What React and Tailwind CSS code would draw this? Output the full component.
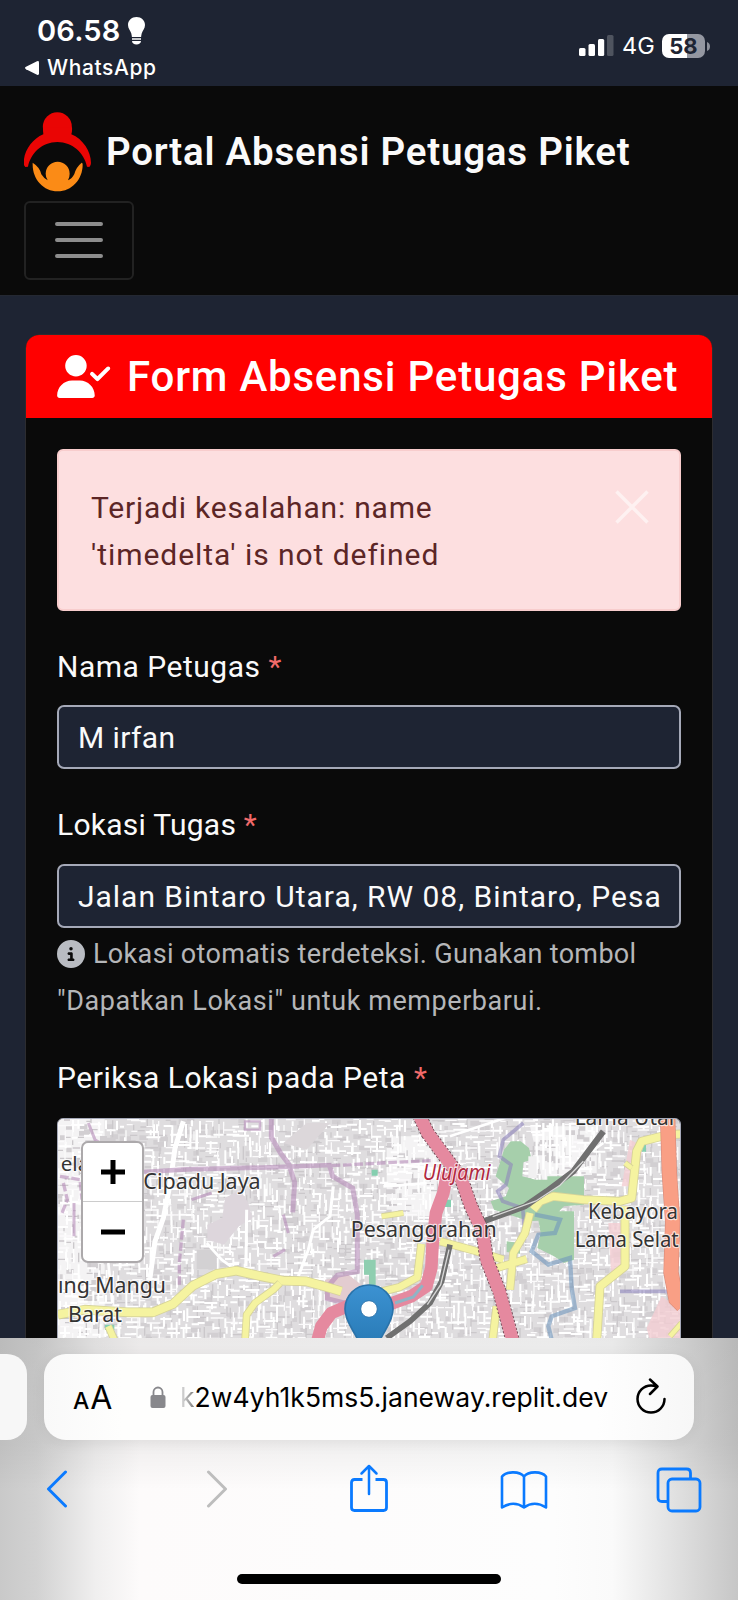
import React from 'react';
import { FaUserCheck, FaCircleInfo } from 'react-icons/fa6';

const sans = "font-['Roboto','Liberation_Sans',sans-serif]";
const system = "font-['Inter','Liberation_Sans',sans-serif]";

/* Deterministic random numbers for the built-up area of the map. */
function makeRandom(seed) {
  let s = seed;
  return () => {
    s = (s * 1664525 + 1013904223) % 4294967296;
    return s / 4294967296;
  };
}

function buildTexture() {
  const r = makeRandom(77);
  const lines = { street: '', edge: '', thin: '', block: '' };
  for (let y = 36; y < 705; y += 16) {
    for (let x = 20; x < 1895; x += 20) {
      const px = Math.round(x + r() * 12);
      const py = Math.round(y + r() * 10);
      const len = Math.round(12 + r() * 30);
      const kind = r();
      const dir = r() < 0.5 ? `h${len}` : `v${len}`;
      if (kind < 0.44) lines.street += `M${px} ${py}${dir}`;
      else if (kind < 0.66) lines.thin += `M${px} ${py}${dir}`;
      else if (kind < 0.86) lines.edge += `M${px} ${py}${dir}`;
      else lines.block += `M${px} ${py}h${Math.round(len * 0.8)}v14h-${Math.round(len * 0.8)}z`;
    }
  }
  return lines;
}

const texture = buildTexture();

function Road({ d, color, casing, width }) {
  return (
    <g fill="none" strokeLinejoin="round" strokeLinecap="butt">
      <path d={d} stroke={casing} strokeWidth={width + 5} />
      <path d={d} stroke={color} strokeWidth={width} />
    </g>
  );
}

function MapCanvas() {
  const label = {
    fontFamily: "'Noto Sans', sans-serif",
    paintOrder: 'stroke',
    stroke: 'rgba(255,255,255,0.7)',
    strokeWidth: 7,
    strokeLinejoin: 'round',
    fill: '#333',
    lengthAdjust: 'spacingAndGlyphs',
  };
  const yellow = { color: '#f5f3a0', casing: '#d6d398' };
  return (
    <svg className="block h-[221px] w-[622px]" viewBox="24 38 1866 663" preserveAspectRatio="none">
      <rect x="24" y="38" width="1866" height="663" fill="#dfdddf" />
      <path d="M24 38h140v660h-140zM1010 90h150v240h-150zM1440 60h200v170h-160z" fill="#f4f3f4" />
      <path d={texture.block} fill="#d2cfd2" />
      <path d={texture.edge} stroke="#cbc8cb" strokeWidth="4" fill="none" />
      <path d={texture.street} stroke="#ffffff" strokeWidth="6" fill="none" />
      <path d={texture.thin} stroke="#fbfafb" strokeWidth="4" fill="none" />
      <path d="M525 275l45-25 25 40 12 45-40 25-45 55-50-15v-45l45-20z" fill="#ddd6dc" />
      <path d="M700 110l70-60h70l-70 80z" fill="#dcd7da" />
      <path d="M440 430h60v60h-60z" fill="#d3d1d3" />
      <g stroke="#fff" fill="none">
        <path d="M400 45l-25 80-15 110-20 100-25 70-15 110" strokeWidth="15" />
        <path d="M590 310l-2 170M850 240l-10 90-50 40-15 60-30 80" strokeWidth="9" />
        <path d="M470 410l45 50 55 40M440 130l0-60M30 290h80M175 470l12 120" strokeWidth="8" />
        <path d="M1460 50v140M1480 50v140M1500 50v150M1520 50v140M1540 50v140M1560 50v130" strokeWidth="7" />
        <path d="M1200 90l180-60M1010 170l160 20M1000 240l130-10M1580 270l10-110 70-50" strokeWidth="8" />
      </g>

      {/* Parks */}
      <g fill="#a6cfab">
        <path d="M1362 130l20-25h30l25 20 8 35-25 8-3 42 40 10h35v-10h110v85l-60 5-40 40-65 5-45-15-60-20-10-25 45-15 10-25-40-35z" />
        <path d="M1460 315h112v145l-30 10-30-20-50-25 10-45z" />
        <path d="M1370 405l40 5v32l-40-5z" />
      </g>
      <path d="M1435 150h25v65h-25z" fill="#f1f0f1" />
      <path d="M942 460h20v45h-20zM885 525h32v28h-32zM957 460h20v110h-20z" fill="#8fceb0" />
      <path d="M965 190h18v18h-18zM1185 280h18v22h-18zM1770 112h18v24h-18zM165 655h28v16h-28z" fill="#85cfb0" />
      <path d="M825 520l70-15 45 35-60 50-55-10z" fill="#e3ccd0" />
      <path d="M1740 100l40 20-30 120h-35zM1675 350h38v130l-30 20zM1835 570l60 40v95h-95l-10-40z" fill="#f3cdd2" opacity="0.8" />

      {/* Administrative boundaries */}
      <g fill="none" stroke="#b58bb7" opacity="0.6">
        <path d="M280 197l130-8 250-6 185-7" strokeWidth="14" />
        <path d="M664 38v55l28 48 24 32 18 55-6 90M838 175l10 35 60 35 14 80v170l-60 12-30 35v35l60 15" strokeWidth="15" />
        <path d="M400 340l-12 130v70M30 210l60 10 6 60M40 230l12 50-16 40M845 178l185-10 112-5" strokeWidth="10" strokeDasharray="26 8" />
        <path d="M115 50l20 50 30 20M72 290v100M700 325l15 55M670 450l35-20M425 280l60-20" strokeWidth="9" />
        <path d="M585 70h45v-25h-45z" strokeWidth="7" />
        <path d="M1420 50l-60 50-12 50 35 25-15 60-25 20 15 30 60 20 5 60M1710 555h160" stroke="#8f85bd" strokeWidth="11" />
        <path d="M1455 325l75 15-15 40-50 5-20 50 50 40 65-20 5 90 10 60-70 25-10 30 15 60" stroke="#7197bd" strokeWidth="13" />
      </g>

      {/* Secondary roads */}
      <Road {...yellow} width={24} d="M24 625l80-15 130 8h75l60-25 60-55 70-35 60-10 80 18 60 12 70 2 55 15 50 15" />
      <Road {...yellow} width={18} d="M690 530l-20 20-55 40-25 35-5 80M175 660l20 45" />
      <Road {...yellow} width={20} d="M957 565l90-22 55-30 12-100M1170 405l110 30 80 25M1440 320l-15 60-35 60-10 110M1340 600l-12 100M1330 488l100-30" />
      <Road {...yellow} width={22} d="M1725 300v180l-75 60-10 165M1450 310l20-25 40-15 90 10 110 5 35-10 15-140 15-30 80-20 60-3" />
      <Road {...yellow} width={13} d="M1745 185l-20-15M1060 320l-65 10M1860 690l35-40" />

      {/* Trunk road on the eastern edge */}
      <path d="M1853 38l5 160 10 150-5 150 15 80 20 20" fill="none" stroke="#d98c7b" strokeWidth="46" />
      <path d="M1853 38l5 160 10 150-5 150 15 80 20 20" fill="none" stroke="#f99f85" strokeWidth="42" />

      {/* Railway */}
      <g fill="none">
        <path d="M1660 75l-90 120-80 60-65 45-125 45" stroke="#707070" strokeWidth="18" />
        <path d="M1200 415l-25 110-35 65-60 55-70 50" stroke="#707070" strokeWidth="17" />
        <path d="M1600 165l-70 72-72 47-130 47M1197 430l-25 105-40 60" stroke="#d8d8d8" strokeWidth="4" />
      </g>

      {/* Motorways */}
      <path d="M1107 25l26 55 55 75 45 60 30 85 35 75 12 85 38 95 42 155" fill="none" stroke="#6f4652" strokeWidth="43" strokeDasharray="7 5" />
      <g fill="none" stroke="#e5899f" strokeWidth="38" strokeLinejoin="round">
        <path d="M1107 25l26 55 55 75 45 60 30 85 35 75 12 85 38 95 42 155" />
        <path d="M1192 200l-12 60-22 60-10 90-4 75-15 55-45 30-70 25h-110l-60 25-30 40-12 45" />
      </g>
      <path d="M1035 590l55-18 28-35" fill="none" stroke="#8fb4c5" strokeWidth="9" />

      {/* Place names */}
      <g fontSize="65">
        <text {...label} x="32" y="195" fontSize="62">ela</text>
        <text {...label} x="280" y="248" textLength="352">Cipadu Jaya</text>
        <text {...label} x="902" y="393" textLength="438">Pesanggrahan</text>
        <text {...label} x="24" y="560" textLength="324">ıng Mangu</text>
        <text {...label} x="54" y="646" textLength="162">Barat</text>
        <text {...label} x="1574" y="55" textLength="308">Lama Utar</text>
        <text {...label} x="1614" y="338" textLength="270">Kebayora</text>
        <text {...label} x="1574" y="422" textLength="312">Lama Selat</text>
        <text {...label} x="1118" y="221" textLength="204" fontSize="64" fontStyle="italic" fill="#b0283f">Ulujami</text>
      </g>

      {/* Marker */}
      <defs>
        <linearGradient id="pin" x1="0" y1="0" x2="0" y2="1">
          <stop offset="0" stopColor="#3c92d2" />
          <stop offset="1" stopColor="#2171ab" />
        </linearGradient>
      </defs>
      <path d="M957 536c-41 0-72 33-72 72 0 30 18 54 30 76 22 40 35 75 42 100 7-25 20-60 42-100 12-22 30-46 30-76 0-39-31-72-72-72z" fill="url(#pin)" stroke="#2a73aa" strokeWidth="5" />
      <circle cx="957" cy="608" r="25" fill="#fff" stroke="#2c74ae" strokeWidth="3" />
    </svg>
  );
}

function StatusBar() {
  return (
    <div className={`flex h-[86px] flex-none items-start justify-between bg-[#1e2433] text-white ${system}`}>
      <div className="flex flex-col">
        <div className="flex h-[49px] items-start gap-[9px] pl-[37px] pt-[15px]">
          <span className="w-[82px] whitespace-nowrap text-[29px] font-semibold leading-[32px] tracking-[0.2px]">06.58</span>
          <svg className="mt-[2px] h-[28px] w-[17px]" viewBox="0 0 17 28" fill="#fff">
            <path d="M8.500 0C3.700 0 0 3.500 0 8c0 3.500 2.500 5.500 3.300 8.500.4 1.500.5 2.700.6 3.500h9.200c.1-.8.2-2 .6-3.500C14.500 13.500 17 11.500 17 8c0-4.500-3.700-8-8.500-8zM4 21.200h9v1.500H4zM4 24h9c0 2-2 3.600-4.500 3.600S4 26 4 24z" />
          </svg>
        </div>
        <div className="flex items-center gap-[8px] pl-[25px]">
          <svg className="h-[14px] w-[14px]" viewBox="0 0 14 14" fill="#fff">
            <path d="M1 5.800 12 .3Q14-.4 14 1.600v10.800q0 2-2 1.300L1 8.200Q-1 7 1 5.800z" />
          </svg>
          <span className="text-[21px] font-medium leading-[37px] tracking-[0.6px]">WhatsApp</span>
        </div>
      </div>
      <div className="flex items-center pr-[28px] pt-[29px]">
        <svg className="h-[22px] w-[35px]" viewBox="0 0 35 22" fill="#fff">
          <rect x="0" y="13" width="6.500" height="8" rx="1.500" />
          <rect x="9.500" y="9" width="6.500" height="12" rx="1.500" />
          <rect x="19" y="4" width="6.200" height="17" rx="1.500" />
          <rect x="28" y="0" width="6.500" height="21" rx="1.500" opacity="0.22" />
        </svg>
        <span className="ml-[8px] w-[37px] text-[23.5px] leading-[34px]">4G</span>
        <div className="ml-[3px] flex h-[24px] w-[43px] items-center justify-center rounded-[7px] bg-[linear-gradient(90deg,#fff_58%,#9497a1_58%)] text-[22px] font-bold leading-none text-[#1e2433]">
          58
        </div>
        <svg className="ml-[2px] h-[9px] w-[3px]" viewBox="0 0 3 9" fill="#8d909a">
          <path d="M0 0q3 1 3 4.500T0 9z" />
        </svg>
      </div>
    </div>
  );
}

function Navbar() {
  return (
    <nav className="flex h-[210px] flex-none flex-col items-start border-b border-[#242832] bg-[#0a0a0a] pl-[24px]">
      <div className="flex h-[115px] items-center pt-[17px]">
        <svg className="mt-[9px] h-[80px] w-[67px] self-start" viewBox="0 0 201 240">
          <circle cx="100" cy="44" r="43.500" fill="#ea0504" />
          <path d="M57 46h87q1 12-2 21c35 14 59 52 59 86q0 8-5 12l-7-1c-8-40-43-74-89-74s-80 34-88 74l-8 1q-5-4-5-12c0-34 24-72 59-86q-1-9-1-21z" fill="#ea0504" />
          <path d="M26 152q22 14 26 35 9 14 19 18-6-9-6-20a36 36 0 0 1 72 0q0 11-5 20 12-5 19-19 5-20 22-34 3 0 3 6c0 44-33 80-75 80s-75-36-75-80z" fill="#fb8b16" />
        </svg>
        <span className={`ml-[15px] whitespace-nowrap text-[38.5px] font-semibold leading-[48px] tracking-[0.77px] text-[#fafafa] ${sans}`}>
          Portal Absensi Petugas Piket
        </span>
      </div>
      <button className="flex h-[79px] w-[110px] items-center justify-center rounded-[6px] border-2 border-[#222]">
        <svg className="-ml-px -mt-px h-[36px] w-[48px]" viewBox="0 0 48 36" stroke="#8d8d8d" strokeWidth="4" strokeLinecap="round">
          <path d="M2 2h44M2 18h44M2 34h44" />
        </svg>
      </button>
    </nav>
  );
}

function Label({ children, tracking }) {
  return (
    <label className={`block h-[47px] whitespace-nowrap text-[30px] leading-[46px] text-[#fafafa] ${tracking}`}>
      {children}
      <span className="text-[#f16a6a]"> *</span>
    </label>
  );
}

function Field({ value, tracking }) {
  return (
    <div className="flex h-[64px] items-center overflow-hidden rounded-[7px] border-2 border-[#a5a9b8] bg-[#1e2433] px-[19px] pt-px">
      <span className={`whitespace-nowrap text-[30px] leading-[47px] text-[#fafafa] ${tracking}`}>{value}</span>
    </div>
  );
}

function FormCard() {
  return (
    <main className="h-[1042px] flex-none overflow-hidden bg-[#1e2433] px-[25px] pt-[38px]">
      <section className={`h-[1200px] w-[688px] overflow-hidden rounded-[14px] border border-[#2c2c30] bg-[#0a0a0a] ${sans}`}>
        <h1 className="flex h-[83px] items-center bg-[#ff0000] pl-[31px] text-white">
          <FaUserCheck className="h-[43px] w-[54px] flex-none" />
          <span className="ml-[16px] whitespace-nowrap text-[42px] font-medium leading-[50px] tracking-[0.8px]">
            Form Absensi Petugas Piket
          </span>
        </h1>
        <div className="px-[31px] pt-[31px]">
          <div className="flex h-[162px] items-start justify-between rounded-[6px] border-2 border-[#f8cdcd] bg-[#fddfe0] pl-[32px] pr-[30px] pt-[33px]">
            <p className="text-[30px] leading-[47px] text-[#5c2626]">
              <span className="block tracking-[0.8px]">Terjadi kesalahan: name</span>
              <span className="block tracking-[0.95px]">'timedelta' is not defined</span>
            </p>
            <svg className="mt-[6px] h-[34px] w-[34px]" viewBox="0 0 34 34" stroke="#fef1f1" strokeWidth="3.500">
              <path d="M1.500 1.500l31 31M32.500 1.500l-31 31" />
            </svg>
          </div>
          <div className="pt-[33px]">
            <Label tracking="tracking-[0.5px]">Nama Petugas</Label>
            <div className="pt-[14px]">
              <Field value="M irfan" tracking="tracking-[0.4px]" />
            </div>
          </div>
          <div className="pt-[33px]">
            <Label tracking="tracking-[0.25px]">Lokasi Tugas</Label>
            <div className="pt-[15px]">
              <Field value="Jalan Bintaro Utara, RW 08, Bintaro, Pesa" tracking="tracking-[0.98px]" />
            </div>
            <p className="pt-[3px] text-[27px] leading-[47px] text-[#b5b6b8]">
              <span className="flex items-center gap-[8px] whitespace-nowrap tracking-[0.33px]">
                <FaCircleInfo className="-mt-px h-[28px] w-[28px] flex-none text-[#b9bcc2]" />
                Lokasi otomatis terdeteksi. Gunakan tombol
              </span>
              <span className="block whitespace-nowrap tracking-[0.56px]">"Dapatkan Lokasi" untuk memperbarui.</span>
            </p>
          </div>
          <div className="pt-[30px]">
            <Label tracking="tracking-[0.53px]">Periksa Lokasi pada Peta</Label>
            <div className="relative mt-[16px] h-[400px] overflow-hidden rounded-[6px] border border-[#a5a9b8]">
              <MapCanvas />
              <div className="absolute left-[23px] top-[22px] flex h-[122px] w-[63px] flex-col overflow-hidden rounded-[7px] border-2 border-[#aca9ab] bg-white">
                <div className="flex h-[59px] flex-none items-center justify-center border-b border-[#ccc]">
                  <svg className="h-[24px] w-[24px]" viewBox="0 0 24 24" stroke="#000" strokeWidth="5">
                    <path d="M0 12h24M12 0v24" />
                  </svg>
                </div>
                <div className="flex h-[59px] items-center justify-center">
                  <svg className="h-[24px] w-[24px]" viewBox="0 0 24 24" stroke="#000" strokeWidth="5">
                    <path d="M0 12h24" />
                  </svg>
                </div>
              </div>
            </div>
          </div>
        </div>
      </section>
    </main>
  );
}

function BrowserBar() {
  const line = { fill: 'none', stroke: '#0a7aff', strokeWidth: 2.8, strokeLinejoin: 'round', strokeLinecap: 'round' };
  return (
    <footer className={`flex h-[262px] flex-none flex-col bg-[linear-gradient(180deg,rgba(0,0,0,0.07)_0%,rgba(0,0,0,0.05)_40%,rgba(0,0,0,0)_58%),linear-gradient(90deg,#c9c9c9_0%,#d2d2d2_5%,#f0efef_13%,#fdfbfb_19%,#fdfdfd_75%,#fafafa_83%,#e2e2e2_91%,#c6c6c6_100%)] ${system}`}>
      <div className="flex pt-[16px]">
        <div className="h-[86px] w-[27px] rounded-r-[20px] bg-[#f7f7f7]" />
        <div className="ml-[17px] flex h-[86px] w-[650px] items-center rounded-[22px] bg-[linear-gradient(90deg,#f9f9f9,#fefefd_12%,#fefefe_85%,#f7f7f7)] shadow-[0_3px_14px_rgba(0,0,0,0.07)]">
          <div className="flex w-[78px] items-baseline whitespace-nowrap pl-[29px] pt-[4px] text-black">
            <span className="text-[23px] font-medium leading-[40px]">A</span>
            <span className="ml-px text-[32px] leading-[40px]">A</span>
          </div>
          <svg className="ml-[28px] h-[22px] w-[16px]" viewBox="0 0 16 22">
            <rect x="0.500" y="9" width="15" height="13" rx="2" fill="#88888c" />
            <path d="M3.500 10V6a4.500 4.500 0 0 1 9 0v4" fill="none" stroke="#88888c" strokeWidth="1.800" />
          </svg>
          <span className="ml-[14px] w-[430px] whitespace-nowrap text-[26.5px] leading-[36px] tracking-[0.05px] text-black">
            <span className="bg-[linear-gradient(90deg,#e5e5e5,#777)] bg-clip-text text-transparent">k</span>
            2w4yh1k5ms5.janeway.replit.dev
          </span>
          <svg className="ml-[26px] h-[36px] w-[30px] -translate-y-px" viewBox="0 0 30 36" fill="none" stroke="#000" strokeWidth="2.500" strokeLinecap="round" strokeLinejoin="round">
            <path d="M20.500 8.300Q17.800 7.500 15 7.500a13.500 13.500 0 1 0 13.500 13.500M14 1.500l7.500 7-7.500 7.500" />
          </svg>
        </div>
      </div>
      <div className="flex pt-[22px]">
        <svg className="ml-[46px] mt-[8px] h-[38px] w-[22px]" viewBox="0 0 22 38">
          <path {...line} strokeWidth="3" d="M19.500 2 2.500 19l17 17" />
        </svg>
        <svg className="ml-[138px] mt-[8px] h-[38px] w-[22px]" viewBox="0 0 22 38">
          <path {...line} stroke="#bdbdbd" strokeWidth="3" d="m2.500 2 17 17-17 17" />
        </svg>
        <svg className="ml-[122px] h-[52px] w-[38px]" viewBox="0 0 38 52">
          <path {...line} strokeLinecap="butt" d="M12.500 17.500h-8q-3 0-3 3v25q0 3 3 3h29q3 0 3-3v-25q0-3-3-3h-8" />
          <path {...line} strokeWidth="2.500" d="M19 32V4M11.500 11.500 19 4l7.500 7.500" />
        </svg>
        <svg className="ml-[112px] mt-[8px] h-[40px] w-[48px]" viewBox="0 0 48 40">
          <path {...line} strokeWidth="2.600" d="M24 6.500C20 1.500 7 .5 2 6.500v31c7-4.500 15-5 22 0 7-5 15-4.500 22 0v-31C41 .5 28 1.500 24 6.500zM24 6.500v31" />
        </svg>
        <svg className="ml-[108px] mt-[5px] h-[46px] w-[46px]" viewBox="0 0 46 46">
          <path {...line} strokeLinecap="butt" d="M12 34.500H6q-4 0-4-4V6q0-4 4-4h24.500q4 0 4 4v6" />
          <rect {...line} x="12" y="12" width="32" height="32" rx="4" />
        </svg>
      </div>
      <div className="mx-auto mt-[60px] h-[10px] w-[264px] rounded-full bg-black" />
    </footer>
  );
}

export default function App() {
  return (
    <div className="flex h-[1600px] w-[738px] flex-col overflow-hidden">
      <StatusBar />
      <Navbar />
      <FormCard />
      <BrowserBar />
    </div>
  );
}
